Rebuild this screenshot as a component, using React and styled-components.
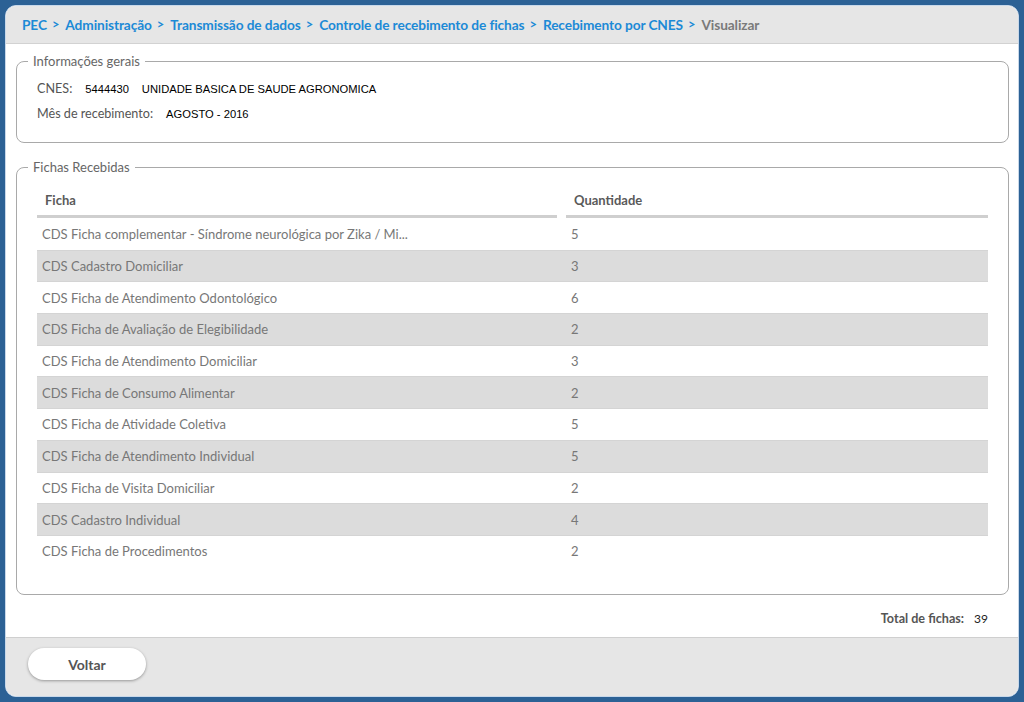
import React from "react";
import styled, { createGlobalStyle } from "styled-components";

const GlobalStyle = createGlobalStyle`
  html, body {
    margin: 0;
    padding: 0;
    background: #2c6195;
  }
  body {
    font-family: Lato, "Open Sans", sans-serif;
  }
  #root {
    height: 702px;
    box-sizing: border-box;
    padding: 5px 5px 5px 5px;
  }
`;

const Strings = {
  crumbs: [
    "PEC",
    "Administração",
    "Transmissão de dados",
    "Controle de recebimento de fichas",
    "Recebimento por CNES",
  ],
  current: "Visualizar",
  general: "Informações gerais",
  received: "Fichas Recebidas",
  total: "Total de fichas:",
  back: "Voltar",
};

const fichas = [
  ["CDS Ficha complementar - Síndrome neurológica por Zika / Mi...", 5],
  ["CDS Cadastro Domiciliar", 3],
  ["CDS Ficha de Atendimento Odontológico", 6],
  ["CDS Ficha de Avaliação de Elegibilidade", 2],
  ["CDS Ficha de Atendimento Domiciliar", 3],
  ["CDS Ficha de Consumo Alimentar", 2],
  ["CDS Ficha de Atividade Coletiva", 5],
  ["CDS Ficha de Atendimento Individual", 5],
  ["CDS Ficha de Visita Domiciliar", 2],
  ["CDS Cadastro Individual", 4],
  ["CDS Ficha de Procedimentos", 2],
];

const App = () => {
  const total = fichas.reduce((sum, f) => sum + f[1], 0);

  return (
    <>
      <GlobalStyle />
      <Window>
        <Header>
          {Strings.crumbs.map((c) => (
            <React.Fragment key={c}>
              <Crumb>{c}</Crumb>
              <Sep>&gt;</Sep>
            </React.Fragment>
          ))}
          <Crumb current>{Strings.current}</Crumb>
        </Header>

        <Body>
          <Fieldset>
            <Legend>{Strings.general}</Legend>
            <InfoRow>
              <Label>CNES:</Label>
              <Value>5444430</Value>
              <Value>UNIDADE BASICA DE SAUDE AGRONOMICA</Value>
            </InfoRow>
            <InfoRow>
              <Label>Mês de recebimento:</Label>
              <Value>AGOSTO - 2016</Value>
            </InfoRow>
          </Fieldset>

          <Fieldset table>
            <Legend>{Strings.received}</Legend>
            <HeadRow>
              <HeadCell>Ficha</HeadCell>
              <HeadCell>Quantidade</HeadCell>
            </HeadRow>
            {fichas.map(([name, qty], i) => (
              <Row key={name} odd={i % 2 === 1} first={i === 0}>
                <Cell>{name}</Cell>
                <Cell>{qty}</Cell>
              </Row>
            ))}
          </Fieldset>

          <TotalLine>
            <TotalLabel>{Strings.total}</TotalLabel>
            <TotalValue>{total}</TotalValue>
          </TotalLine>
        </Body>

        <Footer>
          <Btn>{Strings.back}</Btn>
        </Footer>
      </Window>
    </>
  );
};

const Window = styled.div`
  height: 100%;
  box-sizing: border-box;
  display: flex;
  flex-direction: column;
  background: #fff;
  border: 1px solid #c8d8ea;
  border-radius: 11px;
  overflow: hidden;
`;

const Header = styled.div`
  height: 38px;
  flex: none;
  box-sizing: border-box;
  display: flex;
  align-items: center;
  padding: 0 0 1px 16px;
  background: #e6e6e6;
  border-bottom: 1px solid #d2d2d2;
  font-size: 13.7px;
  font-weight: 700;
  letter-spacing: -0.1px;
`;

const Crumb = styled.span`
  color: ${({ current }) => (current ? "#7a7a7a" : "#1c8ad6")};
`;

const Sep = styled.span`
  color: #1c8ad6;
  margin: 0 6px 0 5px;
  font-size: 13px;
`;

const Body = styled.div`
  flex: 1;
  display: flex;
  flex-direction: column;
  padding: 9px 9px 0 10px;
`;

const Fieldset = styled.fieldset`
  margin: 0 0 ${({ table }) => (table ? "0" : "16px")} 0;
  padding: ${({ table }) => (table ? "10px 20px 27px 20px" : "7px 20px 16px 20px")};
  border: 1px solid #a9a9a9;
  border-radius: 8px;
`;

const Legend = styled.legend`
  margin-left: -9px;
  padding: 0 5px;
  font-size: 13px;
  line-height: 16px;
  color: #666;
`;

const InfoRow = styled.div`
  display: flex;
  align-items: center;
  height: 25px;
`;

const Label = styled.span`
  font-size: 12.6px;
  color: #555;
  margin-right: 13px;
`;

const Value = styled.span`
  font-family: "Liberation Sans", Arial, sans-serif;
  font-size: 11.2px;
  color: #000;
  margin-right: 13px;
`;

const HeadRow = styled.div`
  display: grid;
  grid-template-columns: 520px 1fr;
  column-gap: 9px;
`;

const HeadCell = styled.div`
  height: 30px;
  display: flex;
  align-items: center;
  padding-left: 8px;
  font-size: 13px;
  font-weight: 700;
  color: #5a5a5a;
  border-bottom: 3px solid #cfcfcf;
`;

const Row = styled.div`
  display: grid;
  grid-template-columns: 520px 1fr;
  column-gap: 9px;
  height: 31.7px;
  box-sizing: border-box;
  align-items: center;
  background: ${({ odd }) => (odd ? "#dcdcdc" : "#fff")};
  border-top: 1px solid ${({ first }) => (first ? "transparent" : "#d4d4d4")};
`;

const Cell = styled.div`
  padding-left: 5px;
  font-size: 13px;
  color: #777;
  white-space: nowrap;
`;

const TotalLine = styled.div`
  display: flex;
  justify-content: flex-end;
  align-items: center;
  height: 42px;
  box-sizing: border-box;
  padding: 6px 21px 0 0;
`;

const TotalLabel = styled.span`
  font-size: 12.6px;
  font-weight: 700;
  color: #555;
  margin-right: 10px;
`;

const TotalValue = styled.span`
  font-size: 12px;
  color: #222;
`;

const Footer = styled.div`
  height: 59px;
  flex: none;
  box-sizing: border-box;
  display: flex;
  align-items: center;
  padding: 0 0 6px 22px;
  background: #e6e6e6;
  border-top: 1px solid #cfcfcf;
`;

const Btn = styled.button`
  width: 118px;
  height: 32px;
  border: none;
  border-radius: 16px;
  background: #fff;
  box-shadow: 0 1px 3px rgba(0, 0, 0, 0.35);
  font-family: Lato, sans-serif;
  font-size: 14px;
  font-weight: 700;
  color: #555;
  cursor: pointer;
`;

export default App;
